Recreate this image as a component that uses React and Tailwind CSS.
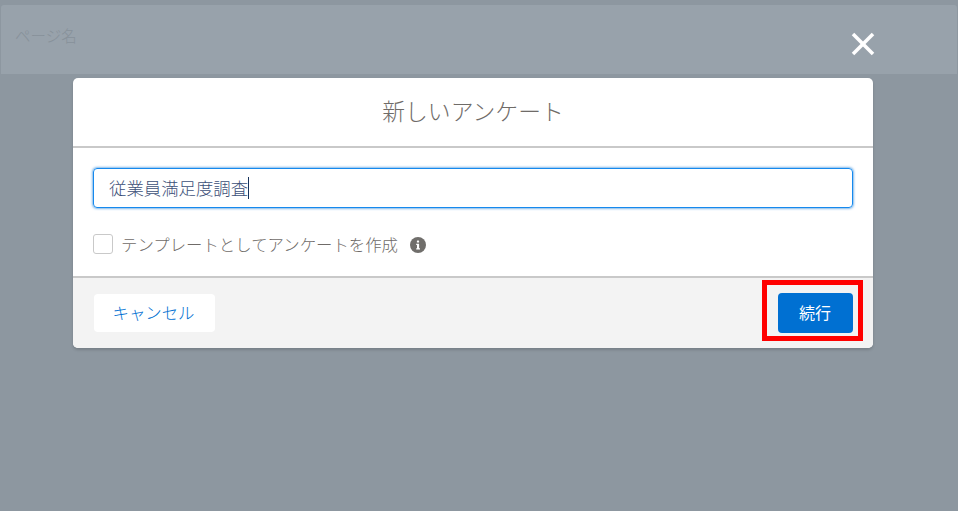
import { X } from "lucide-react";

function App() {
    return (
        <div className="relative h-[511px] w-[958px] overflow-hidden bg-[#8d97a0] font-['Noto_Sans_CJK_JP',sans-serif]">
            {/* ページ背景 */}
            <div className="mx-[1px] mt-[5px] h-[69px] rounded-t-[3px] bg-[#98a2ab] pl-[14px] pt-[19px] text-[15.5px] font-light leading-[22px] text-[#87919a]">
                ページ名
            </div>

            {/* 閉じるボタン */}
            <button className="absolute left-[843px] top-[24px] flex h-[40px] w-[40px] items-center justify-center text-white">
                <X size={40} strokeWidth={2.1} strokeLinecap="butt" />
            </button>

            {/* モーダル */}
            <div className="absolute left-[73px] top-[78px] w-[800px] overflow-hidden rounded-[5px] bg-white shadow-[0_2px_3px_rgba(0,0,0,0.16)]">
                <div className="flex h-[70px] items-center justify-center border-b-2 border-[#c9c9c9] pb-[2px] text-[22.8px] font-light text-[#6f6b68]">
                    新しいアンケート
                </div>
                <div className="h-[128px] px-[20px] pt-[20px]">
                    <div className="flex h-[40px] items-center rounded-[4px] border border-[#1589ee] pl-[15px] text-[17.4px] font-light text-[#3c5078] shadow-[0_0_3px_#0070d2]">
                        <span>従業員満足度調査</span>
                        <span className="h-[22px] w-px bg-[#16325c]" />
                    </div>
                    <div className="mt-[26px] flex items-center">
                        <span className="h-[20px] w-[20px] rounded-[3px] border border-[#c9c9c9] bg-white" />
                        <span className="ml-[8px] text-[16.4px] font-light leading-[20px] text-[#6f6b68]">
                            テンプレートとしてアンケートを作成
                        </span>
                        <svg viewBox="0 0 16 16" className="ml-[12px] mt-[2px] h-[16px] w-[16px]">
                            <circle cx="8" cy="8" r="8" fill="#706e6b" />
                            <rect x="6.9" y="3.4" width="2.2" height="2.2" rx="0.5" fill="#fff" />
                            <path d="M6.2 6.8H9.1V11.3H10V12.6H6.2V11.3H7V8.1H6.2Z" fill="#fff" />
                        </svg>
                    </div>
                </div>
                <div className="flex h-[72px] items-center justify-between border-t-2 border-[#c9c9c9] bg-[#f3f3f3] pl-[21px] pr-[20px]">
                    <button className="h-[38px] w-[121px] rounded-[4px] bg-white pb-[2px] pr-[2px] text-[16.4px] font-light text-[#0070d2]">
                        キャンセル
                    </button>
                    <button className="h-[40px] w-[75px] rounded-[4px] bg-[#0070d2] pb-[2px] pr-[1px] text-[16px] text-white">
                        続行
                    </button>
                </div>
            </div>

            {/* 赤枠 */}
            <div className="absolute left-[762px] top-[280px] h-[61px] w-[101px] border-[5px] border-[#ff0000]" />
        </div>
    );
}

export default App;
